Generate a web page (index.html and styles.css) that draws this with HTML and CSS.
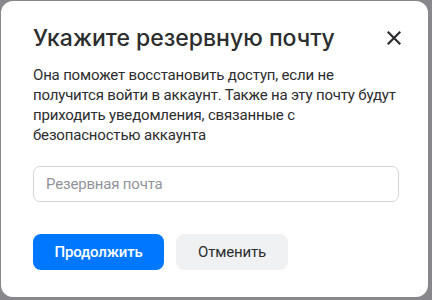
FILE: index.html
```html
<!DOCTYPE html>
<html lang="ru">
<head>
<meta charset="utf-8">
<link rel="stylesheet" href="styles.css">
</head>
<body>
<div class="card">
  <div class="header">
    <h1 class="title">Укажите резервную почту</h1>
    <button class="close" aria-label="Закрыть">
      <svg width="14" height="14" viewBox="0 0 14 14"><path d="M1.5 1.5L12.5 12.5M12.5 1.5L1.5 12.5" stroke="#2c2d2e" stroke-width="2.2" stroke-linecap="square"/></svg>
    </button>
  </div>
  <p class="text">Она поможет восстановить доступ, если не получится войти в аккаунт. Также на эту почту будут приходить уведомления, связанные с безопасностью аккаунта</p>
  <input class="field" type="text" placeholder="Резервная почта">
  <div class="actions">
    <button class="btn primary">Продолжить</button>
    <button class="btn secondary">Отменить</button>
  </div>
</div>
</body>
</html>
```

FILE: styles.css
```css
html, body {
  margin: 0;
  padding: 0;
  background: #88888c;
}
body {
  width: 432px;
  height: 300px;
  overflow: hidden;
  font-family: Roboto, "Liberation Sans", sans-serif;
}
.card {
  box-sizing: border-box;
  margin: 1px 0 0 1px;
  width: 427px;
  height: 296px;
  background: #fff;
  border-radius: 12px;
  padding: 22px 22px 0 32px;
}
.header {
  display: flex;
  align-items: center;
  justify-content: space-between;
}
.title {
  margin: 0;
  font-family: Inter, "Noto Sans", sans-serif;
  font-weight: 500;
  font-size: 23px;
  line-height: 30px;
  color: #2c2d2e;
}
.close {
  border: 0;
  background: none;
  padding: 0;
  width: 24px;
  height: 24px;
  display: flex;
  align-items: center;
  justify-content: center;
}
.text {
  margin: 12px 0 0 0;
  width: 368px;
  font-size: 15px;
  line-height: 20px;
  letter-spacing: -0.18px;
  color: #2c2d2e;
}
.field {
  display: block;
  box-sizing: border-box;
  margin-top: 21px;
  width: 366px;
  height: 36px;
  border: 1px solid #d3d4d8;
  border-radius: 7px;
  padding: 0 12px;
  font-family: inherit;
  font-size: 15px;
  letter-spacing: -0.18px;
  color: #2c2d2e;
  outline: none;
}
.field::placeholder {
  color: #929399;
}
.actions {
  display: flex;
  gap: 12px;
  margin-top: 32px;
}
.btn {
  height: 36px;
  border: 0;
  border-radius: 8px;
  font-family: inherit;
  font-size: 15px;
  font-weight: 500;
  letter-spacing: -0.18px;
  padding: 0;
}
.primary {
  background: #0077ff;
  color: #fff;
  width: 131px;
}
.secondary {
  background: #f0f1f3;
  color: #2c2d2e;
  font-weight: 400;
  width: 112px;
}
```
